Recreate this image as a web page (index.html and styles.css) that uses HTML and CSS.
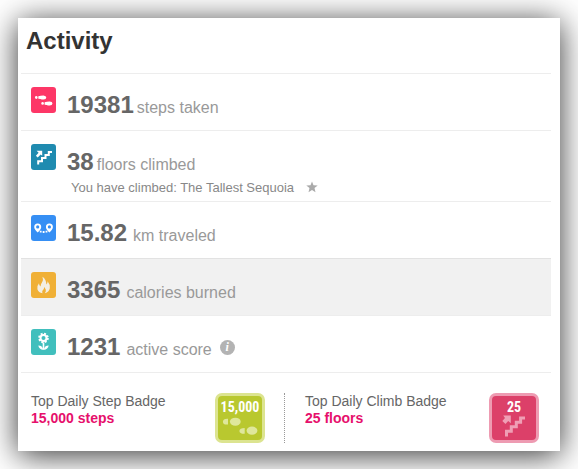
FILE: index.html
```html
<!DOCTYPE html>
<html lang="en">
<head>
  <meta charset="UTF-8">
  <title>Activity</title>
  <link rel="stylesheet" href="styles.css">
</head>
<body>

<main class="card">
  <h1>Activity</h1>

  <ul class="stats">
    <li class="stat">
      <svg class="icon steps" viewBox="0 0 25 25" aria-hidden="true">
        <ellipse cx="5.3" cy="10" rx="1.3" ry="1.4"/>
        <path d="M7.3 8.8Q9.5 8 12.5 8Q15.3 8.3 15.3 10Q15.2 11.9 12.6 12Q10.5 12 9.4 11.4L7.3 11.3Z"/>
        <ellipse cx="11.6" cy="15.9" rx="1.3" ry="1.4"/>
        <path d="M13.6 14.8Q16 14 18.6 14Q21.5 14.2 21.5 16Q21.3 18 18.7 18.1Q16.8 18.1 15.6 17.4L13.6 17.2Z"/>
      </svg>
      <div class="info">
        <p class="line"><strong>19381</strong><span>steps taken</span></p>
      </div>
    </li>
    <li class="stat">
      <svg class="icon floors" viewBox="0 0 25 25" aria-hidden="true">
        <path d="M5.6 6.2H11.2V11.3L9.7 10L6.7 13L4.9 11.2L7.6 8.2Z"/>
        <path class="stairs" d="M7.2 20V16.8H11V13.6H14.5V10.5H17.8V7.6H21"/>
      </svg>
      <div class="info">
        <p class="line"><strong>38</strong><span>floors climbed</span></p>
        <p class="note">You have climbed: The Tallest Sequoia
          <svg class="star" viewBox="0 0 12 12" aria-hidden="true"><path d="M6 .4L7.5 4.2L11.7 4.5L8.5 7.1L9.5 11.2L6 9L2.5 11.2L3.5 7.1L.3 4.5L4.5 4.2Z"/></svg>
        </p>
      </div>
    </li>
    <li class="stat">
      <svg class="icon distance" viewBox="0 0 25 25" aria-hidden="true">
        <path fill-rule="evenodd" d="M6.7 17Q3.2 13.8 3.2 11.4A3.5 3.5 0 0 1 10.2 11.4Q10.2 13.8 6.7 17ZM6.7 9.8A1.6 1.6 0 1 0 6.7 13A1.6 1.6 0 1 0 6.7 9.8Z"/>
        <path fill-rule="evenodd" d="M18.4 17Q14.9 13.8 14.9 11.4A3.5 3.5 0 0 1 21.9 11.4Q21.9 13.8 18.4 17ZM18.4 9.8A1.6 1.6 0 1 0 18.4 13A1.6 1.6 0 1 0 18.4 9.8Z"/>
        <path d="M8.8 15.3h1.8v1.8h-1.8zM11.7 15.6h1.8v1.8h-1.8zM14.6 15.3h1.8v1.8h-1.8z"/>
      </svg>
      <div class="info">
        <p class="line wide"><strong>15.82</strong><span>km traveled</span></p>
      </div>
    </li>
    <li class="stat active">
      <svg class="icon calories" viewBox="0 0 25 25" aria-hidden="true">
        <path d="M11.5 4.2Q15.5 7 15.3 12.1Q16.7 11.3 16.6 8.8Q19.5 12.3 18.8 15.8Q18 19.7 13.9 20.8Q15.4 18.8 14.7 17Q13.9 15.3 13.2 14.4Q13.1 17 11.6 18Q10.8 19.3 11.5 20.8Q7.5 20 6.4 16.7Q5.6 13.4 8 10.7Q8 13.2 9.5 13.9Q9.7 11.6 11.2 9.5Q12.5 7.1 11.5 4.2Z"/>
      </svg>
      <div class="info">
        <p class="line wide"><strong>3365</strong><span>calories burned</span></p>
      </div>
    </li>
    <li class="stat">
      <svg class="icon score" viewBox="0 0 25 25" aria-hidden="true">
        <circle cx="12.5" cy="8.5" r="3" class="ring"/>
        <circle cx="12.5" cy="8.5" r="4.3" class="petals"/>
        <path d="M11.7 13h1.6v7.2h-1.6z"/>
        <path d="M12.3 20.3Q8 20.2 7.3 16.1Q11.5 16.2 12.3 20.3ZM12.7 20.3Q17 20.2 17.7 16.1Q13.5 16.2 12.7 20.3Z"/>
      </svg>
      <div class="info">
        <p class="line wide"><strong>1231</strong><span>active score</span><button type="button" class="help" aria-label="About active score">i</button></p>
      </div>
    </li>
  </ul>

  <div class="badges">
    <section class="badge-box">
      <div class="badge-text">
        <h2>Top Daily Step Badge</h2>
        <p>15,000 steps</p>
      </div>
      <div class="badge green">
        <span>15,000</span>
        <svg viewBox="0 0 44 22" aria-hidden="true">
          <path d="M10 2.8V8.5Q5 9 4.9 5.7Q5 2.5 10 2.8ZM26.7 12V17.8Q21.5 18 21.4 15Q21.5 12 26.7 12Z"/>
          <ellipse cx="17.3" cy="5.7" rx="5.4" ry="4"/>
          <ellipse cx="34" cy="14.7" rx="5.4" ry="4.1"/>
        </svg>
      </div>
    </section>
    <section class="badge-box">
      <div class="badge-text">
        <h2>Top Daily Climb Badge</h2>
        <p>25 floors</p>
      </div>
      <div class="badge pink">
        <span>25</span>
        <svg viewBox="0 0 44 22" aria-hidden="true">
          <path d="M11.2 -.4H18.8V7.2L16.2 5L13.5 8L10.3 5L13 2Z"/>
          <path class="stairs" d="M14.5 20.5V15.3H19.3V10.8H24.3V6.3H28.6V2H33"/>
        </svg>
      </div>
    </section>
  </div>
</main>

</body>
</html>
```
FILE: styles.css
```css
* { box-sizing: border-box; }
body { margin: 0; padding: 18px; background: #fff; font-family: "Liberation Sans", Arial, sans-serif; color: #666; }
h1, h2, p, ul { margin: 0; padding: 0; }

.card { background: #fff; box-shadow: 0 4px 30px rgba(0, 0, 0, 0.8); padding-bottom: 8px; }
h1 { padding: 9px 8px 18px; font-size: 24px; line-height: 28px; color: #333; }

/* Stats list */
.stats { list-style: none; margin: 0 9px 0 3px; border-bottom: 1px solid #ededed; }
.stat { display: flex; gap: 11px; min-height: 57px; padding: 13px 10px 3px; border-top: 1px solid #ededed; }
.stat.active { background: #f1f1f1; border-color: #e2e2e2; }
.icon { flex: none; width: 25px; height: 26px; border-radius: 3px; fill: #fff; }
.steps { background: #fd3767; }
.floors { background: #1f8bb0; }
.distance { background: #368ff4; }
.calories { background: #f0b036; fill: #f3eee2; }
.score { background: #41bfbd; }
.stairs { fill: none; stroke: #fff; stroke-width: 2; }
.ring { fill: none; stroke: #fff; stroke-width: 2; }
.petals { fill: none; stroke: #fff; stroke-width: 2; stroke-dasharray: 1.9 1.48; }

.line { display: flex; align-items: baseline; gap: 3px; padding-top: 4px; line-height: 20px; font-size: 16px; color: #999; }
.line.wide { gap: 6px; }
.line strong { font-size: 24px; line-height: 28px; color: #666; }
.note { padding: 2px 0 0 4px; font-size: 13px; line-height: 20px; color: #888; }
.star { width: 12px; height: 12px; margin-left: 8px; fill: #aaa; vertical-align: -1px; }
.help { align-self: center; width: 15px; height: 15px; margin-left: 2px; padding: 0; border: 0; border-radius: 50%; background: #b3b3b3; color: #fff; font: italic bold 12px/15px "Liberation Serif", serif; text-align: center; }

/* Badges */
.badges { display: grid; grid-template-columns: 1fr 1fr; padding: 20px 21px 0 13px; }
.badge-box { display: flex; justify-content: space-between; }
.badge-box:first-child { padding-right: 19px; border-right: 1px dotted #999; }
.badge-box:last-child { padding-left: 20px; }
.badge-text { line-height: 17px; font-size: 14px; }
.badge-text h2 { font-size: 14px; font-weight: normal; }
.badge-text p { font-weight: bold; color: #e6106c; }
.badge { width: 50px; height: 50px; border: 3px solid; border-radius: 7px; text-align: center; color: #fff; }
.badge span { display: block; padding-top: 2px; font: bold 14px/18px "Liberation Sans Narrow", "Roboto Condensed", "Open Sans Condensed", sans-serif; }
.badge svg { display: block; width: 44px; height: 22px; overflow: visible; }
.green { background: #b9c82f; border-color: #dce490; }
.green svg { fill: #dfe79b; }
.pink { background: #dc4069; border-color: #ee9bb2; }
.pink svg { fill: #ef9fb5; }
.pink .stairs { fill: none; stroke: #ef9fb5; stroke-width: 3; }
```
